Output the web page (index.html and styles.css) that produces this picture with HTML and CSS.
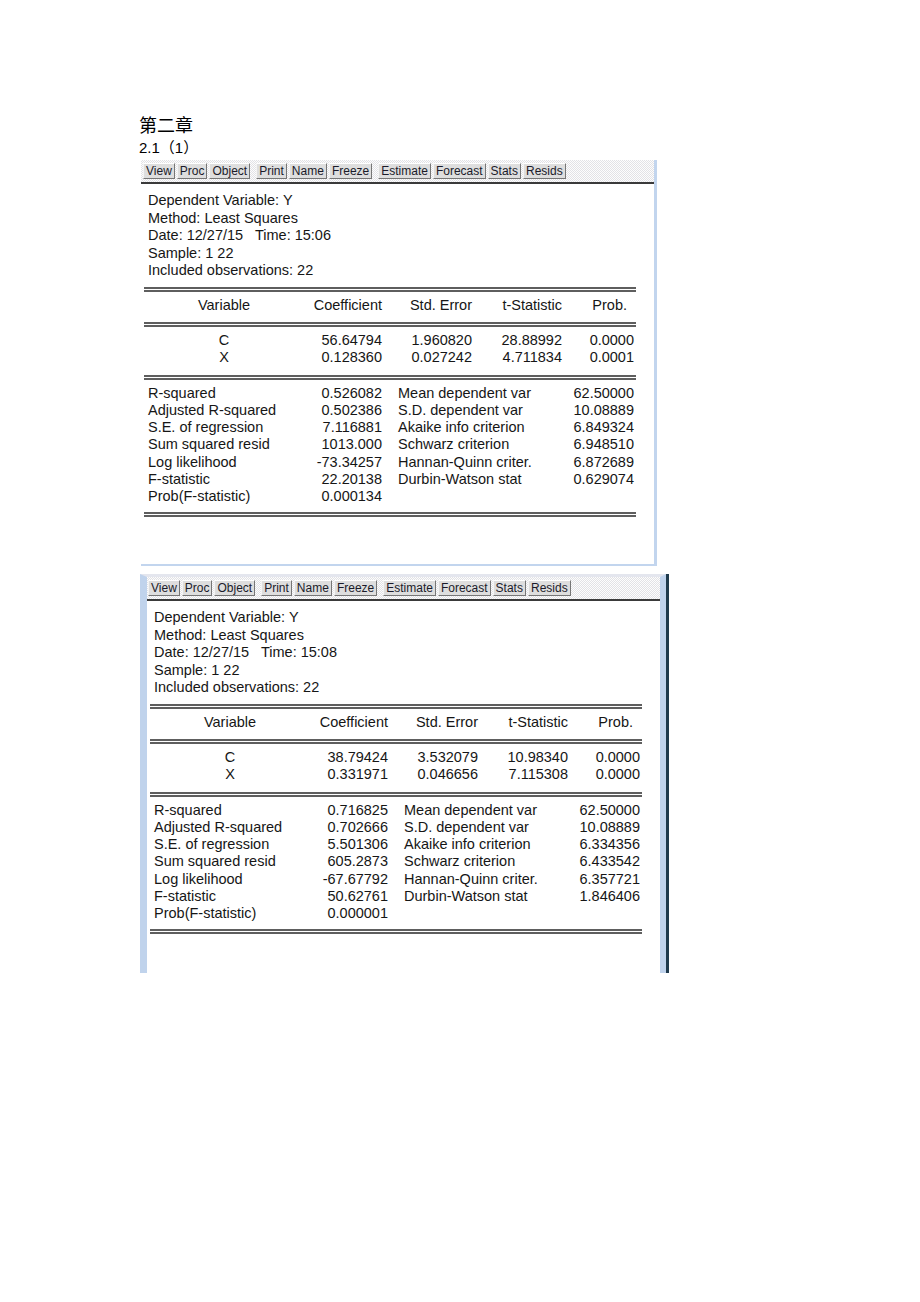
FILE: index.html
```html
<!DOCTYPE html>
<html lang="zh">
<head>
<meta charset="utf-8">
<title>第二章</title>
<link rel="stylesheet" href="styles.css">
</head>
<body>
<div class="page">
  <h1 class="title">第二章</h1>
  <p class="sub">2.1（1）</p>

  <div class="win win1">
    <div class="toolbar">
      <span class="btn">View</span><span class="btn">Proc</span><span class="btn">Object</span>
      <span class="btn grp">Print</span><span class="btn">Name</span><span class="btn">Freeze</span>
      <span class="btn grp">Estimate</span><span class="btn">Forecast</span><span class="btn">Stats</span><span class="btn">Resids</span>
    </div>
    <div class="body">
      <div class="info">
        <div>Dependent Variable: Y</div>
        <div>Method: Least Squares</div>
        <div>Date: 12/27/15&nbsp;&nbsp; Time: 15:06</div>
        <div>Sample: 1 22</div>
        <div>Included observations: 22</div>
      </div>
      <div class="dbl"></div>
      <div class="coef head">
        <span class="c-var">Variable</span><span>Coefficient</span><span>Std. Error</span><span>t-Statistic</span><span class="c-prob">Prob.</span>
      </div>
      <div class="dbl"></div>
      <div class="coefs">
        <div class="coef"><span class="c-var">C</span><span>56.64794</span><span>1.960820</span><span>28.88992</span><span>0.0000</span></div>
        <div class="coef"><span class="c-var">X</span><span>0.128360</span><span>0.027242</span><span>4.711834</span><span>0.0001</span></div>
      </div>
      <div class="dbl"></div>
      <div class="stats">
        <span>R-squared</span><span class="v">0.526082</span><span class="l2">Mean dependent var</span><span class="v">62.50000</span>
        <span>Adjusted R-squared</span><span class="v">0.502386</span><span class="l2">S.D. dependent var</span><span class="v">10.08889</span>
        <span>S.E. of regression</span><span class="v">7.116881</span><span class="l2">Akaike info criterion</span><span class="v">6.849324</span>
        <span>Sum squared resid</span><span class="v">1013.000</span><span class="l2">Schwarz criterion</span><span class="v">6.948510</span>
        <span>Log likelihood</span><span class="v">-73.34257</span><span class="l2">Hannan-Quinn criter.</span><span class="v">6.872689</span>
        <span>F-statistic</span><span class="v">22.20138</span><span class="l2">Durbin-Watson stat</span><span class="v">0.629074</span>
        <span>Prob(F-statistic)</span><span class="v">0.000134</span><span class="l2"></span><span class="v"></span>
      </div>
      <div class="dbl"></div>
    </div>
  </div>

  <div class="win win2">
    <div class="toolbar">
      <span class="btn">View</span><span class="btn">Proc</span><span class="btn">Object</span>
      <span class="btn grp">Print</span><span class="btn">Name</span><span class="btn">Freeze</span>
      <span class="btn grp">Estimate</span><span class="btn">Forecast</span><span class="btn">Stats</span><span class="btn">Resids</span>
    </div>
    <div class="body">
      <div class="info">
        <div>Dependent Variable: Y</div>
        <div>Method: Least Squares</div>
        <div>Date: 12/27/15&nbsp;&nbsp; Time: 15:08</div>
        <div>Sample: 1 22</div>
        <div>Included observations: 22</div>
      </div>
      <div class="dbl"></div>
      <div class="coef head">
        <span class="c-var">Variable</span><span>Coefficient</span><span>Std. Error</span><span>t-Statistic</span><span class="c-prob">Prob.</span>
      </div>
      <div class="dbl"></div>
      <div class="coefs">
        <div class="coef"><span class="c-var">C</span><span>38.79424</span><span>3.532079</span><span>10.98340</span><span>0.0000</span></div>
        <div class="coef"><span class="c-var">X</span><span>0.331971</span><span>0.046656</span><span>7.115308</span><span>0.0000</span></div>
      </div>
      <div class="dbl"></div>
      <div class="stats">
        <span>R-squared</span><span class="v">0.716825</span><span class="l2">Mean dependent var</span><span class="v">62.50000</span>
        <span>Adjusted R-squared</span><span class="v">0.702666</span><span class="l2">S.D. dependent var</span><span class="v">10.08889</span>
        <span>S.E. of regression</span><span class="v">5.501306</span><span class="l2">Akaike info criterion</span><span class="v">6.334356</span>
        <span>Sum squared resid</span><span class="v">605.2873</span><span class="l2">Schwarz criterion</span><span class="v">6.433542</span>
        <span>Log likelihood</span><span class="v">-67.67792</span><span class="l2">Hannan-Quinn criter.</span><span class="v">6.357721</span>
        <span>F-statistic</span><span class="v">50.62761</span><span class="l2">Durbin-Watson stat</span><span class="v">1.846406</span>
        <span>Prob(F-statistic)</span><span class="v">0.000001</span><span class="l2"></span><span class="v"></span>
      </div>
      <div class="dbl"></div>
    </div>
  </div>
</div>
</body>
</html>
```

FILE: styles.css
```css
html, body {
  margin: 0;
  padding: 0;
  background: #ffffff;
}

.page {
  padding: 113px 0 40px 139px;
  font-family: "Liberation Sans", "Noto Sans CJK SC", sans-serif;
  color: #000;
}

.title {
  margin: 0;
  font-family: "Noto Sans CJK SC", sans-serif;
  font-size: 18px;
  line-height: 22px;
  font-weight: 400;
}

.sub {
  margin: 4px 0 0 0;
  font-family: "Liberation Sans", "Noto Sans CJK SC", sans-serif;
  font-size: 15px;
  line-height: 18px;
}

.win {
  box-sizing: border-box;
  background: #ffffff;
}

.win1 {
  margin: 3px 0 0 2px;
  width: 516px;
  border-right: 3px solid #c2d5ee;
  border-bottom: 2px solid #c2d5ee;
}

.win2 {
  margin: 8px 0 0 1px;
  width: 526px;
  border-top: 3px solid #e4e6ee;
  border-left: 7px solid #c0d3ec;
  border-right: 6px solid #c0d3ec;
  box-shadow: 3px 0 0 #1f3a4c;
}

.toolbar {
  height: 22px;
  border-bottom: 2px solid #3a3a3a;
  background-color: #f4f4f4;
  background-image: repeating-conic-gradient(#e2e2e6 0 25%, #fdfdfd 0 50%);
  background-size: 2px 2px;
  padding-left: 2px;
  display: flex;
  align-items: flex-start;
  white-space: nowrap;
}

.win2 .toolbar {
  padding-left: 1px;
}

.btn {
  margin-top: 3px;
  margin-right: 2px;
  height: 16px;
  box-sizing: border-box;
  padding: 0 2px;
  font-family: "Liberation Sans", sans-serif;
  font-size: 12px;
  line-height: 14px;
  color: #1b1b2a;
  background: #dedede;
  border: 1px solid;
  border-color: #ffffff #767676 #767676 #f4f4f4;
}

.btn.grp {
  margin-left: 4px;
}

.body {
  font-family: "Liberation Sans", sans-serif;
  font-size: 14.5px;
  color: #161616;
}

.win1 .body {
  height: 380px;
}

.win2 .body {
  height: 372px;
}

.info {
  padding: 8px 0 0 7px;
  line-height: 17.5px;
}

.dbl {
  margin-left: 3px;
  width: 492px;
  height: 1px;
  border-top: 2px solid #5e5e5e;
  border-bottom: 2px solid #5e5e5e;
}

.info + .dbl {
  margin-top: 7px;
}

.coef {
  display: grid;
  grid-template-columns: 152px 82px 90px 90px 72px;
  padding-left: 7px;
  line-height: 17.5px;
  white-space: nowrap;
}

.coef span {
  text-align: right;
}

.coef .c-var {
  text-align: center;
}

.head {
  padding-top: 5px;
  padding-bottom: 7.5px;
}

.head .c-prob {
  padding-right: 7px;
}

.coefs {
  padding-top: 5px;
  padding-bottom: 8px;
}

.stats {
  display: grid;
  grid-template-columns: 154px 80px 172px 80px;
  padding: 5px 0 6px 7px;
  line-height: 17.33px;
  white-space: nowrap;
}

.stats .v {
  text-align: right;
}

.stats .l2 {
  padding-left: 16px;
}
```
